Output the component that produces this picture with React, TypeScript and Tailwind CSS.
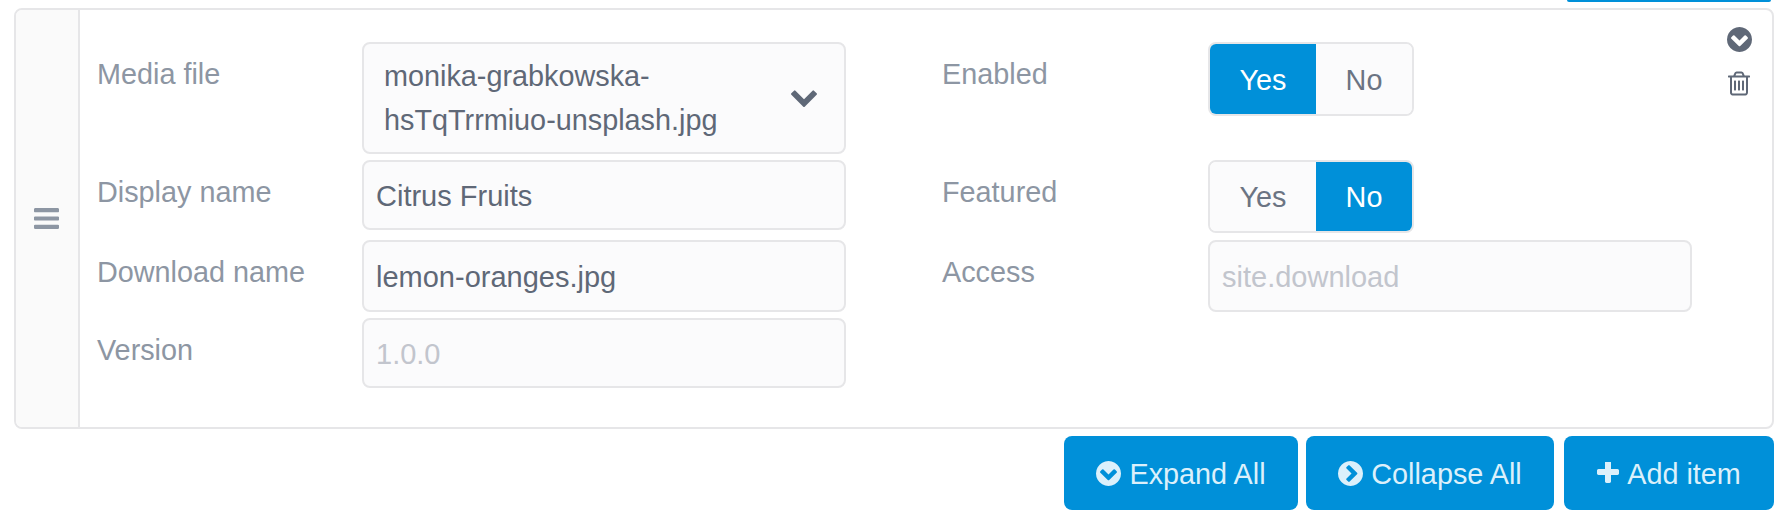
const CIRCLE_RIGHT =
  "M845 1395l454-454q19-19 19-45t-19-45l-454-454q-19-19-45-19t-45 19l-102 102q-19 19-19 45t19 45l307 307-307 307q-19 19-19 45t19 45l102 102q19 19 45 19t45-19zm819-499q0 209-103 385.5t-279.5 279.5-385.5 103-385.5-103-279.5-279.5-103-385.5 103-385.5 279.5-279.5 385.5-103 385.5 103 279.5 279.5 103 385.5z";
const TRASH =
  "M704 736v576q0 14-9 23t-23 9h-64q-14 0-23-9t-9-23v-576q0-14 9-23t23-9h64q14 0 23 9t9 23zm256 0v576q0 14-9 23t-23 9h-64q-14 0-23-9t-9-23v-576q0-14 9-23t23-9h64q14 0 23 9t9 23zm256 0v576q0 14-9 23t-23 9h-64q-14 0-23-9t-9-23v-576q0-14 9-23t23-9h64q14 0 23 9t9 23zm128 724v-948h-896v948q0 22 7 40.5t14.5 27 10.5 8.5h832q3 0 10.5-8.5t14.5-27 7-40.5zm-672-1076h448l-48-117q-7-9-17-11h-317q-10 2-17 11zm928 32v64q0 14-9 23t-23 9h-96v948q0 83-47 143.5t-113 60.5h-832q-66 0-113-58.5t-47-141.5v-952h-96q-14 0-23-9t-9-23v-64q0-14 9-23t23-9h309l70-167q15-37 54-63t79-26h320q40 0 79 26t54 63l70 167h309q14 0 23 9t9 23z";
const BARS =
  "M1664 1344v128q0 26-19 45t-45 19h-1408q-26 0-45-19t-19-45v-128q0-26 19-45t45-19h1408q26 0 45 19t19 45zm0-512v128q0 26-19 45t-45 19h-1408q-26 0-45-19t-19-45v-128q0-26 19-45t45-19h1408q26 0 45 19t19 45zm0-512v128q0 26-19 45t-45 19h-1408q-26 0-45-19t-19-45v-128q0-26 19-45t45-19h1408q26 0 45 19t19 45z";
const PLUS =
  "M1600 736v192q0 40-28 68t-68 28h-416v416q0 40-28 68t-68 28h-192q-40 0-68-28t-28-68v-416h-416q-40 0-68-28t-28-68v-192q0-40 28-68t68-28h416v-416q0-40 28-68t68-28h192q40 0 68 28t28 68v416h416q40 0 68 28t28 68z";
const CHEVRON =
  "M1683 808l-742 741q-19 19-45 19t-45-19l-742-741q-19-19-19-45.5t19-45.5l166-165q19-19 45-19t45 19l531 531 531-531q19-19 45-19t45 19l166 165q19 19 19 45.5t-19 45.5z";

function Icon({ d, box, className, rotate }: { d: string; box: string; className: string; rotate?: boolean }) {
  return (
    <svg viewBox={box} className={`${className} shrink-0`} fill="currentColor" aria-hidden="true">
      <path d={d} transform={rotate ? "rotate(90 896 896)" : undefined} />
    </svg>
  );
}

function Label({ children, right }: { children: string; right?: boolean }) {
  return (
    <div className={`${right ? "w-[266px]" : "w-[265px]"} shrink-0 pt-[14px] text-[28.8px] leading-[36px] text-[#8d96a3]`}>
      {children}
    </div>
  );
}

function TextInput({ value, placeholder, h }: { value?: string; placeholder?: string; h: string }) {
  return (
    <input
      readOnly
      value={value}
      placeholder={placeholder}
      className={`${h} w-[484px] rounded-[8px] border-2 border-[#e6e6e8] bg-[#fbfbfc] px-3 pt-[2px] text-[29px] text-[#5f6877] outline-none placeholder:text-[#c2c5cd]`}
    />
  );
}

function Toggle({ on, h }: { on: "yes" | "no"; h: string }) {
  const active = "bg-[#0090d9] text-white";
  const idle = "bg-[#fbfbfc] text-[#6b7483]";
  return (
    <div className={`${h} flex w-[206px] overflow-hidden rounded-[8px] border-2 border-[#e6e6e8] text-[28.8px]`}>
      <div className={`${on === "yes" ? active : idle} flex w-[106px] items-center justify-center pt-[3px]`}>Yes</div>
      <div className={`${on === "no" ? active : idle} flex flex-1 items-center justify-center pt-[3px]`}>No</div>
    </div>
  );
}

function Button({ icon, label, w }: { icon: React.ReactNode; label: string; w: string }) {
  return (
    <div className={`${w} flex h-[74px] items-center justify-center gap-[8px] rounded-[8px] bg-[#0090d9] text-[28.8px] text-[#dcf0fb]`}>
      {icon}
      <span className="pt-[3px]">{label}</span>
    </div>
  );
}

export default function App() {
  return (
    <div className="h-[522px] w-full overflow-hidden bg-white pl-[14px] pr-[10px] font-['Liberation_Sans',Arial,sans-serif]">
      <div className="flex justify-end pr-[3px]">
        <div className="h-[2px] w-[204px] rounded-b-[4px] bg-[#0090d9]" />
      </div>
      <div className="mt-[6px] flex h-[421px] rounded-[8px] border-2 border-[#e6e6e8] bg-white">
        <div className="flex w-[64px] shrink-0 items-center justify-center rounded-l-[6px] border-r-2 border-[#e6e6e8] bg-[#fafafa] pr-[1px] text-[#8d96a3]">
          <Icon d={BARS} box="128 256 1536 1280" className="h-[21px] w-[25px]" />
        </div>
        <div className="flex-1 pl-[17px] pr-[16px] pt-[32px]">
          <div className="grid grid-cols-[845px_1fr] grid-rows-[111px_73px_71px_70px] gap-y-[7px]">
            <div className="flex">
              <Label>Media file</Label>
              <div className="flex h-[112px] w-[484px] items-center justify-between rounded-[8px] border-2 border-[#e6e6e8] bg-[#fbfbfc] pl-[20px] pr-[27px] text-[28.8px] leading-[44px] text-[#5f6877]">
                <span>
                  monika-grabkowska-
                  <br />
                  hsTqTrrmiuo-unsplash.jpg
                </span>
                <Icon d={CHEVRON} box="109 448 1574 1120" className="h-[18px] w-[26px]" />
              </div>
            </div>
            <div className="flex">
              <Label right>Enabled</Label>
              <Toggle on="yes" h="h-[74px]" />
            </div>
            <div className="flex">
              <Label>Display name</Label>
              <TextInput value="Citrus Fruits" h="h-[70px]" />
            </div>
            <div className="flex">
              <Label right>Featured</Label>
              <Toggle on="no" h="h-[73px]" />
            </div>
            <div className="flex">
              <Label>Download name</Label>
              <TextInput value="lemon-oranges.jpg" h="h-[72px]" />
            </div>
            <div className="flex">
              <Label right>Access</Label>
              <TextInput placeholder="site.download" h="h-[72px]" />
            </div>
            <div className="flex">
              <Label>Version</Label>
              <TextInput placeholder="1.0.0" h="h-[70px]" />
            </div>
          </div>
        </div>
        <div className="flex w-[64px] shrink-0 flex-col items-center pr-[2px] pt-[17px] text-[#5f6877]">
          <Icon d={CIRCLE_RIGHT} box="128 128 1536 1536" className="h-[25px] w-[25px]" rotate />
          <Icon d={TRASH} box="192 128 1408 1536" className="mt-[19px] h-[25px] w-[22px]" />
        </div>
      </div>
      <div className="mt-[7px] flex justify-end gap-[8px]">
        <Button icon={<Icon d={CIRCLE_RIGHT} box="128 128 1536 1536" className="h-[25px] w-[25px]" rotate />} label="Expand All" w="w-[234px]" />
        <Button icon={<Icon d={CIRCLE_RIGHT} box="128 128 1536 1536" className="h-[25px] w-[25px]" />} label="Collapse All" w="w-[248px]" />
        <div className="ml-[2px]">
          <Button icon={<Icon d={PLUS} box="192 192 1408 1408" className="h-[22px] w-[22px]" />} label="Add item" w="w-[210px]" />
        </div>
      </div>
    </div>
  );
}
